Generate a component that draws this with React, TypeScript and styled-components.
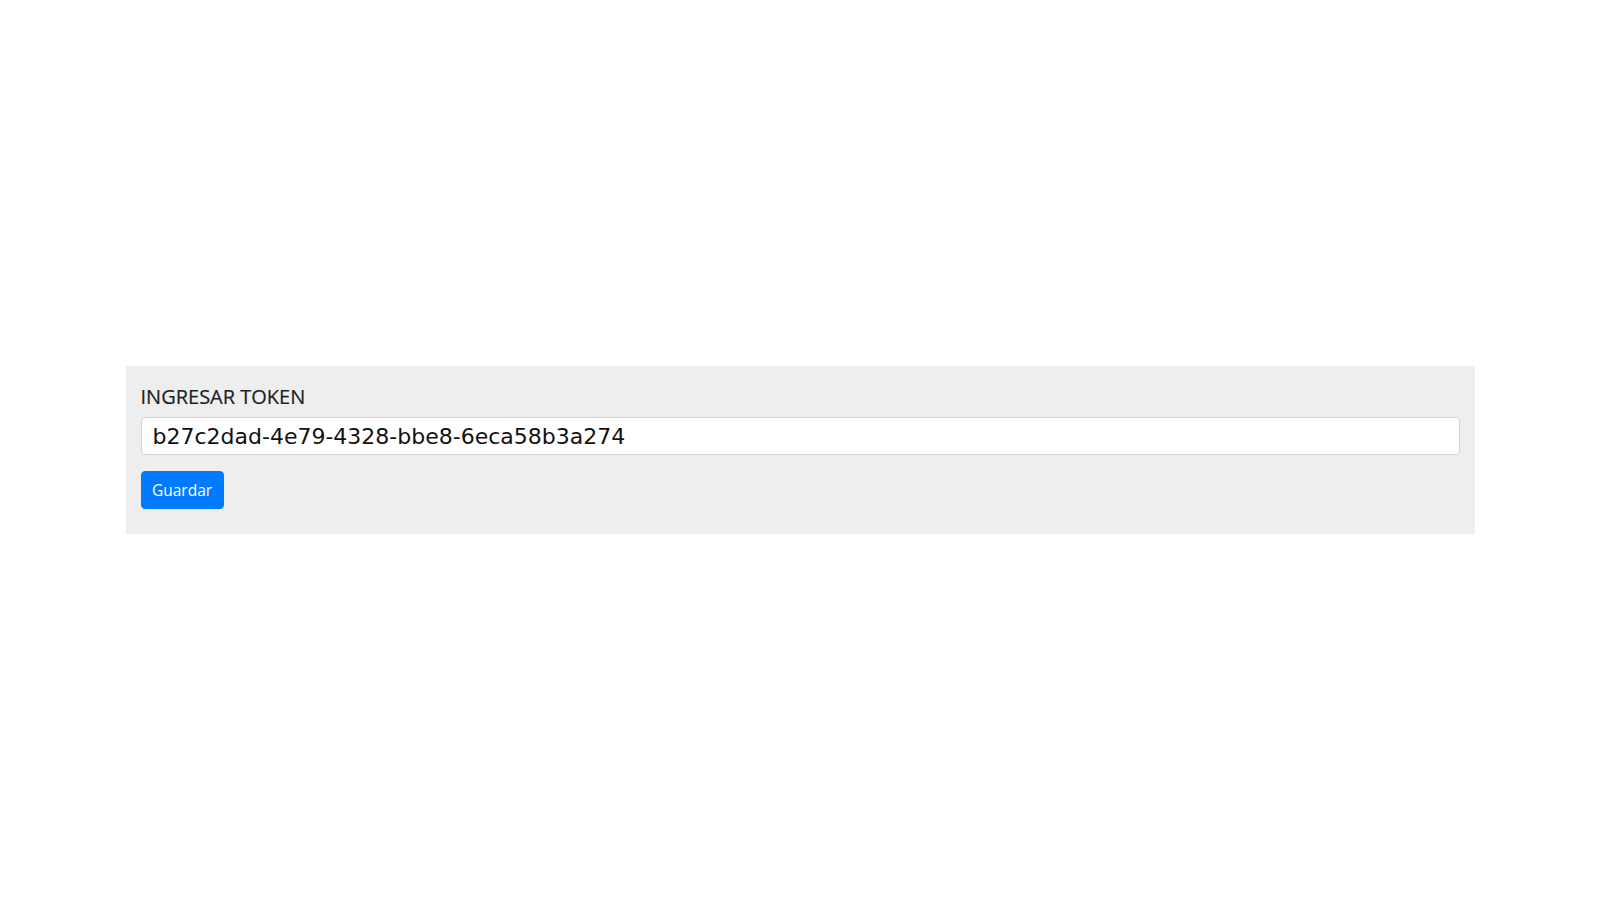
import React from 'react';
import styled, { createGlobalStyle } from 'styled-components';

const GlobalStyle = createGlobalStyle`
  html, body {
    margin: 0;
    padding: 0;
    background: #fff;
  }
  body {
    font-family: 'Open Sans', 'Noto Sans', sans-serif;
    color: #212529;
  }
`;

const Page = styled.div`
  display: flex;
  align-items: center;
  justify-content: center;
  height: 100vh;
`;

const Panel = styled.form`
  box-sizing: border-box;
  width: 1349px;
  height: 168px;
  background: #eeeeee;
  padding: 15px 15px 25px;
  display: flex;
  flex-direction: column;
`;

const Label = styled.label`
  font-size: 20px;
  line-height: 28px;
  margin: 2px 0 6px;
  color: #1b1f24;
  -webkit-text-stroke: 0.2px #1b1f24;
`;

const TokenInput = styled.input`
  box-sizing: border-box;
  width: 100%;
  height: 38px;
  padding: 0 11px;
  border: 1px solid #ced4da;
  border-radius: 4px;
  background: #fff;
  font-family: 'DejaVu Sans', sans-serif;
  font-size: 22px;
  color: #111;
  outline: none;
`;

const SaveButton = styled.button`
  box-sizing: border-box;
  align-self: flex-start;
  margin-top: 16px;
  width: 83px;
  height: 38px;
  padding: 0;
  border: 1px solid #007bff;
  border-radius: 4px;
  background: #007bff;
  color: #fff;
  font-family: 'Open Sans', 'Noto Sans', sans-serif;
  font-size: 15.5px;
  cursor: pointer;
`;

export default function App() {
  return (
    <>
      <GlobalStyle />
      <Page>
        <Panel onSubmit={(e) => e.preventDefault()}>
          <Label htmlFor="token">INGRESAR TOKEN</Label>
          <TokenInput id="token" defaultValue="b27c2dad-4e79-4328-bbe8-6eca58b3a274" />
          <SaveButton type="submit">Guardar</SaveButton>
        </Panel>
      </Page>
    </>
  );
}
